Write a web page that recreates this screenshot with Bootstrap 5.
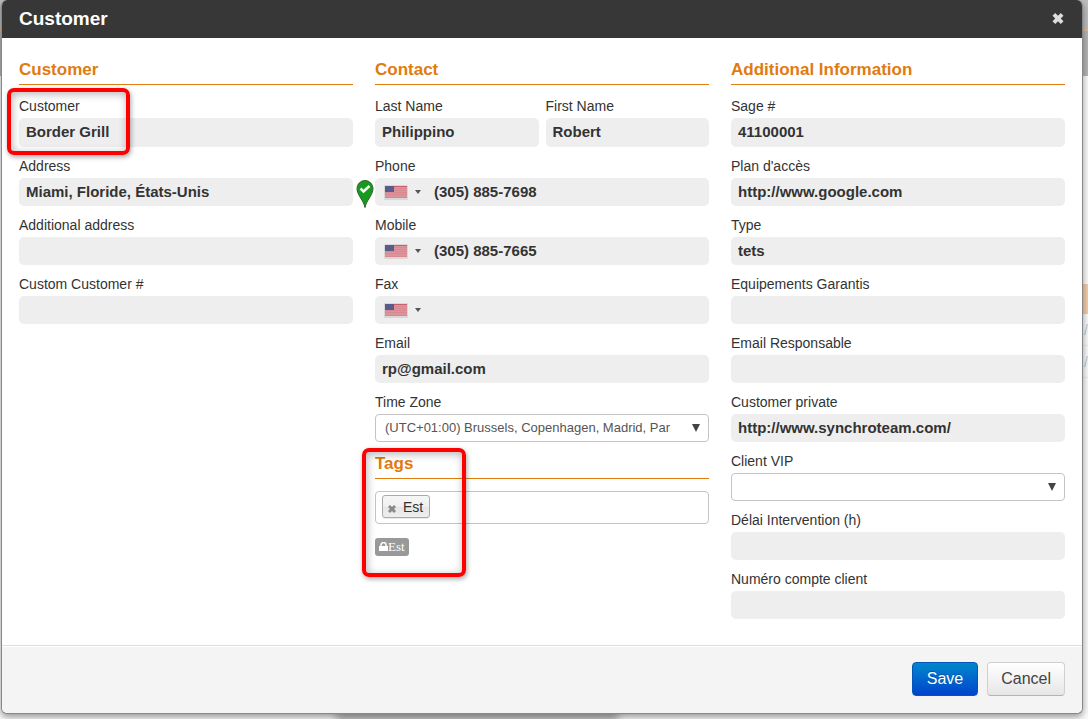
<!DOCTYPE html>
<html lang="en">
<head>
<meta charset="utf-8">
<meta name="viewport" content="width=device-width, initial-scale=1">
<title>Customer</title>
<link href="https://cdn.jsdelivr.net/npm/bootstrap@5.3.0/dist/css/bootstrap.min.css" rel="stylesheet">
<style>
body{font-family:"Liberation Sans",Arial,sans-serif;font-size:14px;line-height:20px;color:#333;background:#fafafa;min-height:100vh;overflow-x:hidden}
/* page left under the dialog */
.page-under{background:#fafafa}
.under-top{height:76px;background:linear-gradient(#bdbdbd 30px,#f3b985 30px,#f3b985 31px,#b5b5b5 31px)}
.under-gap{height:208px}
.under-head{height:30px;background:#f5cda6;margin-left:50%}
.under-row{height:32px;border-bottom:1px solid #eee;color:#b5cbdc;line-height:32px}
.dialog{margin:0 5px 5px 1px;position:relative}
.sheet{border:1px solid #888;border-top:0;border-radius:6px;box-shadow:0 3px 7px rgba(0,0,0,.4);overflow:hidden;color:#333}
.glow{position:absolute;left:31%;right:43%;bottom:-9px;height:12px;background:#b8b8b8;filter:blur(4px)}
.sheet-head{background:#373737;color:#fff;height:38px;padding:0 18px 1px 17px;border:0;border-radius:0}
.sheet-head h1{font-size:19px;line-height:24px;font-weight:bold}
.icon-btn{border:0;background:none;padding:0;line-height:0}
.close-btn{color:#ddd}
.sheet-body{padding:20px 17px 17px}
.cols{--bs-gutter-x:22px}
.sect{font-size:17px;line-height:24px;font-weight:bold;color:#e07b10;padding-bottom:2px;border-bottom:1px solid #e07b10;margin-bottom:11px}
.field{margin-bottom:9px;position:relative}
.field label{display:block;margin-bottom:2px;line-height:20px}
.field .form-control,.phone{height:28px;border:0;border-radius:5px;background:#eee;padding:0 7px 2px;font-size:15px;line-height:20px;font-weight:bold;color:#333}
.sect + .field .form-control,.sect + .row .form-control{height:29px}
.phone .form-control{padding:0 0 2px;background:none}
.phone{padding:0 9px}
.caret-space{margin:0 13px 0 7px}
.field .form-select{height:28px;border:1px solid #c4c4c4;border-radius:4px;padding:0 24px 0 9px;font-size:13px;line-height:20px;color:#555;background:#fff url("data:image/svg+xml,%3Csvg xmlns='http://www.w3.org/2000/svg' viewBox='0 0 8 8'%3E%3Cpath d='M0 0h8L4 8z' fill='%23444'/%3E%3C/svg%3E") no-repeat right 8px center/8px 8px}
.names{--bs-gutter-x:7px}
.tags{padding-top:1px}
.tags .sect{margin-bottom:12px}
.tagbox{height:33px;border:1px solid #c4c4c4;border-radius:4px;padding:0 6px 2px;margin-bottom:12px}
.chip{height:23px;border:1px solid #aaa;border-radius:3px;padding:0 6px 0 5px;gap:7px;background:linear-gradient(#f6f6f6,#f0f0f0 50%,#e6e6e6 52%,#eee);box-shadow:0 1px 0 rgba(0,0,0,.08)}
.chip .icon-btn{color:#888;padding-top:4px}
.lock-tag{height:18px;background:#999;color:#fff;border-radius:3px;padding:0 4px;font:13px/18px "Liberation Serif",serif}
.marker{position:absolute;border:4px solid #f00;border-radius:7px;box-shadow:1px 2px 5px rgba(0,0,0,.35),inset 1px 2px 8px rgba(0,0,0,.3);pointer-events:none}
.marker-name{left:-12px;top:-8px;width:123px;height:67px}
.marker-tags{left:-13px;top:-3px;width:104px;height:129px}
.pin{position:absolute;right:-21px;bottom:-2px}
.sheet-foot{background:#f4f4f4;border-top:1px solid #ddd;box-shadow:inset 0 1px 0 #fff;padding:16px 17px 17px;gap:9px;border-radius:0}
.sheet-foot .btn{font-size:16px;line-height:20px;height:34px;padding:0 13px;border-radius:4px;margin:0}
.sheet-foot .btn-save{padding:0 14px;color:#fff;background:linear-gradient(#08c,#04c);border:1px solid #0554b8;text-shadow:0 -1px 0 rgba(0,0,0,.25)}
.btn-cancel{color:#444;background:linear-gradient(#fff,#e6e6e6);border:1px solid #d0d0d0;border-bottom-color:#b3b3b3}
</style>
<script src="https://cdn.jsdelivr.net/npm/bootstrap@5.3.0/dist/js/bootstrap.bundle.min.js"></script>
</head>
<body class="position-relative">
<svg width="0" height="0" class="position-absolute" aria-hidden="true">
  <symbol id="flag" viewBox="0 0 24 15">
    <rect width="24" height="15" rx="1" fill="#d8d8d8"/>
    <rect x="1" y="1" width="22" height="12" fill="#dc939b"/>
    <path d="M1 1.500h22" stroke="#c4616d"/>
    <path d="M1 3.500h22M1 5.500h22M1 7.500h22M1 9.500h22M1 12.500h22" stroke="#d4828c" stroke-width=".6"/>
    <rect x="1" y="1" width="9" height="6" fill="#5b5b8b"/>
  </symbol>
  <symbol id="caret" viewBox="0 0 6 4"><path d="M0 0h6L3 4z" fill="#555"/></symbol>
  <symbol id="cross" viewBox="0 0 12 12"><path d="M3 0l3 3 3-3 3 3-3 3 3 3-3 3-3-3-3 3-3-3 3-3-3-3z" fill="currentColor"/></symbol>
</svg>

<div class="page-under position-absolute top-0 start-0 w-100 h-100 overflow-hidden" aria-hidden="true">
  <div class="under-top"></div>
  <div class="under-gap"></div>
  <div class="under-head"></div>
  <div class="under-row text-end">/</div>
  <div class="under-row text-end">/</div>
</div>

<main class="dialog">
  <div class="glow"></div>
  <form class="sheet modal-content bg-white">
    <header class="sheet-head modal-header d-flex align-items-center justify-content-between">
      <h1 class="m-0">Customer</h1>
      <button type="button" class="icon-btn close-btn" aria-label="Close"><svg width="12" height="11"><use href="#cross"/></svg></button>
    </header>

    <div class="sheet-body modal-body">
      <div class="row cols">
        <section class="col-4">
          <h2 class="sect">Customer</h2>
          <div class="field">
            <label for="customer">Customer</label>
            <input id="customer" class="form-control" value="Border Grill" readonly>
            <div class="marker marker-name"></div>
          </div>
          <div class="field">
            <label for="address">Address</label>
            <input id="address" class="form-control" value="Miami, Floride, États-Unis" readonly>
            <svg class="pin" width="18" height="28" viewBox="0 0 18 28" aria-hidden="true">
              <path d="M9 27.500C8 21 1 15 1 8.500a8 8 0 0 1 16 0C17 15 10 21 9 27.500z" fill="#159a1d" stroke="#2e5f30"/>
              <path d="M4.500 8.500l3 3 6-5.500" fill="none" stroke="#fff" stroke-width="2.500"/>
            </svg>
          </div>
          <div class="field">
            <label for="address2">Additional address</label>
            <input id="address2" class="form-control" readonly>
          </div>
          <div class="field">
            <label for="custno">Custom Customer #</label>
            <input id="custno" class="form-control" readonly>
          </div>
        </section>

        <section class="col-4">
          <h2 class="sect">Contact</h2>
          <div class="row names">
            <div class="col-6"><div class="field">
              <label for="last">Last Name</label>
              <input id="last" class="form-control" value="Philippino" readonly>
            </div></div>
            <div class="col-6"><div class="field">
              <label for="first">First Name</label>
              <input id="first" class="form-control" value="Robert" readonly>
            </div></div>
          </div>
          <div class="field">
            <label for="phone">Phone</label>
            <div class="phone d-flex align-items-center">
              <button type="button" class="icon-btn d-flex align-items-center" aria-label="Country"><svg width="24" height="15"><use href="#flag"/></svg><svg class="caret-space" width="6" height="4"><use href="#caret"/></svg></button>
              <input id="phone" type="tel" class="form-control" value="(305) 885-7698" readonly>
            </div>
          </div>
          <div class="field">
            <label for="mobile">Mobile</label>
            <div class="phone d-flex align-items-center">
              <button type="button" class="icon-btn d-flex align-items-center" aria-label="Country"><svg width="24" height="15"><use href="#flag"/></svg><svg class="caret-space" width="6" height="4"><use href="#caret"/></svg></button>
              <input id="mobile" type="tel" class="form-control" value="(305) 885-7665" readonly>
            </div>
          </div>
          <div class="field">
            <label for="fax">Fax</label>
            <div class="phone d-flex align-items-center">
              <button type="button" class="icon-btn d-flex align-items-center" aria-label="Country"><svg width="24" height="15"><use href="#flag"/></svg><svg class="caret-space" width="6" height="4"><use href="#caret"/></svg></button>
              <input id="fax" type="tel" class="form-control" readonly>
            </div>
          </div>
          <div class="field">
            <label for="email">Email</label>
            <input id="email" type="email" class="form-control" value="rp@gmail.com" readonly>
          </div>
          <div class="field">
            <label for="zone">Time Zone</label>
            <select id="zone" class="form-select"><option>(UTC+01:00) Brussels, Copenhagen, Madrid, Par</option></select>
          </div>
          <div class="tags position-relative">
            <h2 class="sect">Tags</h2>
            <div class="tagbox d-flex align-items-center bg-white">
              <span class="chip d-flex align-items-center"><button type="button" class="icon-btn" aria-label="Remove Est"><svg width="8" height="8"><use href="#cross"/></svg></button>Est</span>
            </div>
            <span class="lock-tag d-inline-flex align-items-center">
              <svg width="9" height="9" viewBox="0 0 9 9" aria-hidden="true"><path d="M2 5V3a2.500 2.500 0 0 1 5 0v2" fill="none" stroke="#fff" stroke-width="1.500"/><rect y="4" width="9" height="5" fill="#fff"/></svg>Est</span>
            <div class="marker marker-tags"></div>
          </div>
        </section>

        <section class="col-4">
          <h2 class="sect">Additional Information</h2>
          <div class="field">
            <label for="sage">Sage #</label>
            <input id="sage" class="form-control" value="41100001" readonly>
          </div>
          <div class="field">
            <label for="plan">Plan d'accès</label>
            <input id="plan" class="form-control" value="http://www.google.com" readonly>
          </div>
          <div class="field">
            <label for="type">Type</label>
            <input id="type" class="form-control" value="tets" readonly>
          </div>
          <div class="field">
            <label for="equip">Equipements Garantis</label>
            <input id="equip" class="form-control" readonly>
          </div>
          <div class="field">
            <label for="resp">Email Responsable</label>
            <input id="resp" class="form-control" readonly>
          </div>
          <div class="field">
            <label for="private">Customer private</label>
            <input id="private" class="form-control" value="http://www.synchroteam.com/" readonly>
          </div>
          <div class="field">
            <label for="vip">Client VIP</label>
            <select id="vip" class="form-select"><option></option></select>
          </div>
          <div class="field">
            <label for="delay">Délai Intervention (h)</label>
            <input id="delay" class="form-control" readonly>
          </div>
          <div class="field">
            <label for="account">Numéro compte client</label>
            <input id="account" class="form-control" readonly>
          </div>
        </section>
      </div>
    </div>

    <footer class="sheet-foot d-flex justify-content-end">
      <button type="submit" class="btn btn-save">Save</button>
      <button type="button" class="btn btn-cancel">Cancel</button>
    </footer>
  </form>
</main>
</body>
</html>
